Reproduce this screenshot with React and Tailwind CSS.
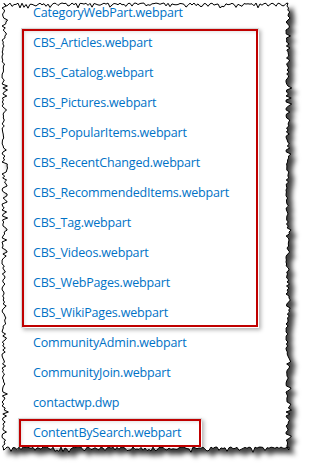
import React from "react"

const files = [
    "CBS_Articles.webpart",
    "CBS_Catalog.webpart",
    "CBS_Pictures.webpart",
    "CBS_PopularItems.webpart",
    "CBS_RecentChanged.webpart",
    "CBS_RecommendedItems.webpart",
    "CBS_Tag.webpart",
    "CBS_Videos.webpart",
    "CBS_WebPages.webpart",
    "CBS_WikiPages.webpart",
]

const after = ["CommunityAdmin.webpart", "CommunityJoin.webpart", "contactwp.dwp"]

// deterministic jitter for the torn paper edge
function jitter(i, seed) {
    const v = Math.sin(i * 12.9898 + seed * 78.233) * 43758.5453
    return v - Math.floor(v)
}

function tornPath() {
    const pts = []
    const step = 2
    for (let x = 4; x <= 289; x += step) pts.push([x, 3 + jitter(x, 1) * jitter(x, 5) * 6])
    for (let y = 6; y <= 450; y += step) pts.push([286 + jitter(y, 2) * jitter(y, 6) * 6.5, y])
    for (let x = 289; x >= 4; x -= step) pts.push([x, 447 + jitter(x, 3) * jitter(x, 7) * 6.5])
    for (let y = 450; y >= 6; y -= step) pts.push([2 + jitter(y, 4) * jitter(y, 8) * 7, y])
    return "M" + pts.map((p) => p[0].toFixed(1) + " " + p[1].toFixed(1)).join(" L") + " Z"
}

function Row({ children, className = "" }) {
    return (
        <div className={"h-[30px] leading-[30px] whitespace-nowrap " + className}>
            {children}
        </div>
    )
}

export default function App() {
    return (
        <div className="relative w-[311px] h-[473px] overflow-hidden bg-white font-['Open_Sans',sans-serif] text-[12.5px] tracking-[-0.18px] text-[#0072c6]">
            {/* torn paper */}
            <svg className="absolute inset-0" width="311" height="473">
                <defs>
                    <filter id="sh" x="-10%" y="-10%" width="130%" height="130%">
                        <feDropShadow dx="5" dy="5" stdDeviation="2.5" floodColor="#000" floodOpacity="0.75" />
                    </filter>
                </defs>
                <path d={tornPath()} fill="#fff" stroke="#000" strokeWidth="1" filter="url(#sh)" />
            </svg>

            <div className="relative flex flex-col -mt-[2px]">
                <Row className="pl-[33px]">CategoryWebPart.webpart</Row>

                <div className="ml-[21px] w-[238px] pl-[12px] outline-2 outline-[#c00000] -outline-offset-[3px] shadow-[inset_4px_4px_4px_-1px_rgba(0,0,0,0.18),2px_2px_4px_rgba(0,0,0,0.3)]">
                    {files.map((f) => (
                        <Row key={f}>{f}</Row>
                    ))}
                </div>

                {after.map((f) => (
                    <Row key={f} className="pl-[33px]">
                        {f}
                    </Row>
                ))}

                <Row className="ml-[18px] w-[184px] pl-[15px] outline-2 outline-[#c00000] -outline-offset-[3px] shadow-[inset_4px_4px_4px_-1px_rgba(0,0,0,0.18),2px_2px_4px_rgba(0,0,0,0.3)]">
                    ContentBySearch.webpart
                </Row>
            </div>
        </div>
    )
}
